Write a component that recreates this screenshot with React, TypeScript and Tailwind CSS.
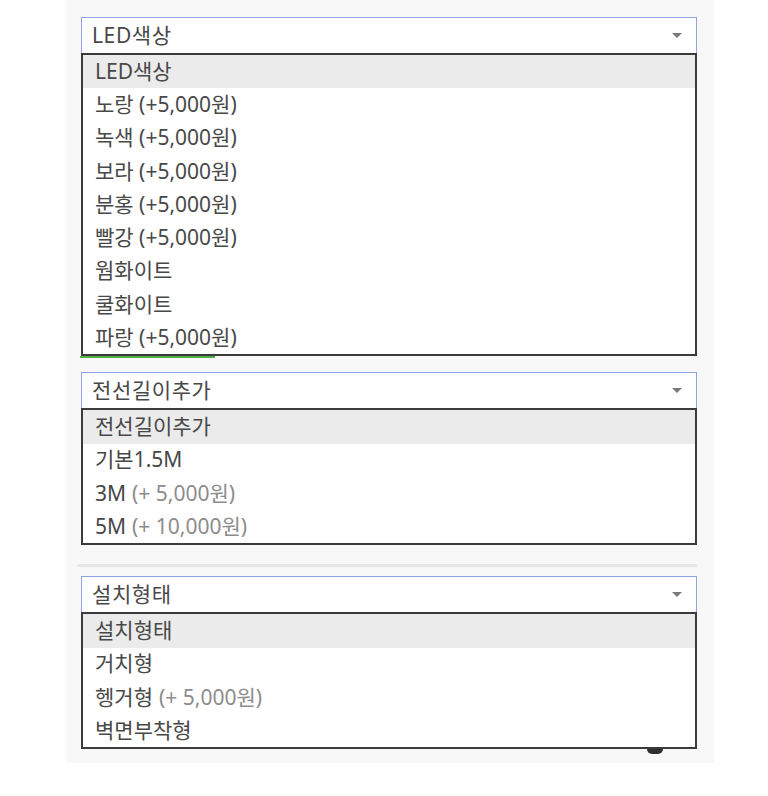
import type { ReactNode } from 'react'

type Option = {
  label: string
  extra?: string
}

interface OpenSelectProps {
  value: string
  options: Option[]
  children?: ReactNode
}

const ledColors: Option[] = [
  { label: 'LED색상' },
  { label: '노랑 (+5,000원)' },
  { label: '녹색 (+5,000원)' },
  { label: '보라 (+5,000원)' },
  { label: '분홍 (+5,000원)' },
  { label: '빨강 (+5,000원)' },
  { label: '웜화이트' },
  { label: '쿨화이트' },
  { label: '파랑 (+5,000원)' },
]

const cableLengths: Option[] = [
  { label: '전선길이추가' },
  { label: '기본1.5M' },
  { label: '3M', extra: '(+ 5,000원)' },
  { label: '5M', extra: '(+ 10,000원)' },
]

const mountTypes: Option[] = [
  { label: '설치형태' },
  { label: '거치형' },
  { label: '헹거형', extra: '(+ 5,000원)' },
  { label: '벽면부착형' },
]

function OpenSelect({ value, options, children }: OpenSelectProps) {
  return (
    <div className="w-[616px]">
      {/* closed control */}
      <div className="flex h-[36px] items-center justify-between border border-b-0 border-[#8ea2e6] bg-white pl-[10px] pr-[14px]">
        <span className="text-[21px] tracking-[0.6px] text-[#484848]">{value}</span>
        <svg className="h-[5px] w-[10px]" viewBox="0 0 10 5" aria-hidden="true">
          <path d="M0 0H10L5 5Z" fill="#7a7a7a" />
        </svg>
      </div>
      {/* option list */}
      <ul className="border-2 border-[#3b3b3b] bg-white">
        {options.map((opt, i) => (
          <li
            key={opt.label}
            className={
              i === 0
                ? 'flex h-[33.25px] items-center bg-[#ebebeb] pl-[12px] text-[21px] text-[#484848]'
                : 'flex h-[33.25px] items-center pl-[12px] text-[21px] text-[#484848]'
            }
          >
            {opt.label}
            {opt.extra && <span className="ml-[6px] text-[#8c8c8c]">{opt.extra}</span>}
          </li>
        ))}
      </ul>
      {children}
    </div>
  )
}

export default function App() {
  return (
    <div
      className="h-[796px] w-[768px] bg-white"
      style={{ fontFamily: '"Noto Sans", "Noto Sans CJK KR", sans-serif' }}
    >
      <div className="ml-[66px] h-[763px] w-[648px] bg-[#f8f8f8] pl-[15px] pt-[17px]">
        <OpenSelect value="LED색상" options={ledColors}>
          <div className="-ml-px h-[2px] w-[135px] bg-[#52b04a]" />
        </OpenSelect>

        <div className="mt-[14px]">
          <OpenSelect value="전선길이추가" options={cableLengths} />
        </div>

        <div className="mt-[19px] h-[3px] w-[620px] -ml-[4px] rounded-sm bg-[#e6e6e6]" />

        <div className="mt-[9px]">
          <OpenSelect value="설치형태" options={mountTypes}>
            <div className="ml-[566px] h-[5px] w-[16px] rounded-b-full bg-[#2e2e2e]" />
          </OpenSelect>
        </div>
      </div>
    </div>
  )
}
